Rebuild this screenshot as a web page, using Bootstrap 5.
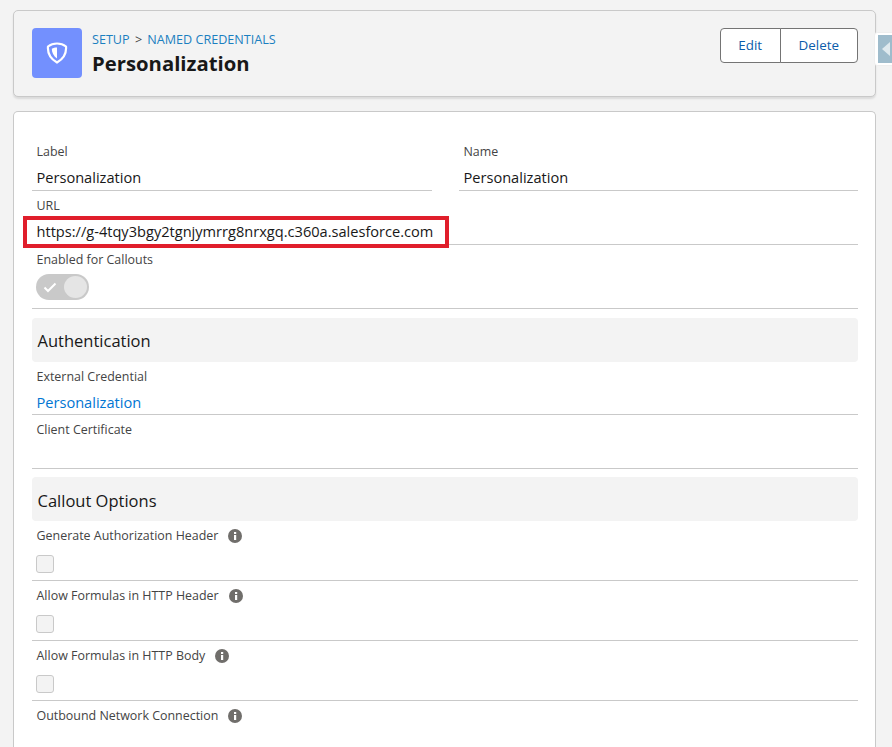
<!DOCTYPE html>
<html>
<head>
    <meta charset="UTF-8">
    <title>Personalization</title>
    <link href="https://cdn.jsdelivr.net/npm/bootstrap@5.3.0/dist/css/bootstrap.min.css" rel="stylesheet">
    <style>
        html, body { height: 747px; overflow: hidden; }
        body { background-color: #f3f3f3; color: #181818; font-family: "Open Sans", "Noto Sans", sans-serif; font-size: 14px; position: relative; }
        .page-wrap { padding: 10px 16px 0 13px; display: flex; flex-direction: column; gap: 14px; height: 747px; }
        .head-card { height: 87px; background: #f3f3f3; border: 1px solid #c9c9c9; border-radius: 5px; box-shadow: 0 2px 2px rgba(0,0,0,.1); padding: 17px 17px 0 18px; flex-shrink: 0; }
        .obj-icon { width: 50px; height: 50px; background: #7390fe; border-radius: 4px; }
        .head-text { margin-left: 2px; }
        .crumbs { font-size: 12.6px; line-height: 16px; color: #1b7fc0; margin-top: 4px; }
        .crumbs span { color: #444; margin: 0 2px; }
        .rec-title { font-size: 20.3px; line-height: 30px; font-weight: 700; margin: 0; color: #181818; }
        .act-group .btn { font-size: 13.4px; color: #0b5cab; background: #fff; border-color: #747474; height: 35px; padding: 0 18px; border-radius: 4px; }
        .act-group .btn:first-child { padding: 0 17.500px; }
        .body-card { flex: 1; background: #fff; border: 1px solid #c9c9c9; border-bottom: 0; border-radius: 5px 5px 0 0; padding: 25px 17px 0 18px; }
        .field-box { border-bottom: 1px solid #c9c9c9; padding: 7px 4px 0 4.5px; height: 54px; }
        .field-box.tall { height: 64px; }
        .field-box.opt { height: 60px; }
        .field-box.last { border-bottom: 0; }
        .field-lbl { font-size: 12.45px; line-height: 16px; color: #444; display: flex; align-items: center; gap: 10px; }
        .field-val { font-size: 14.6px; line-height: 20px; margin-top: 6.5px; color: #181818; }
        .field-val a { color: #0176d3; text-decoration: none; }
        .sect-head { height: 44px; background: #f3f3f3; border-radius: 4px; font-size: 16.5px; line-height: 45px; padding-left: 5.5px; margin: 9px 0 0 0; color: #181818; }
        .sect-head.second { margin-top: 8px; line-height: 47px; }
        .sect-head + .field-box { height: 53px; }
        .sect-head + .field-box.opt { height: 60px; }
        .toggle-off { width: 53px; height: 26px; background: #c9c9c9; border-radius: 13px; margin-top: 5.5px; margin-left: -0.5px; padding: 2px; display: flex; align-items: center; justify-content: space-between; }
        .toggle-off i { width: 23px; height: 22px; background: #e5e5e5; border-radius: 50%; display: block; }
        .fake-check { width: 18px; height: 18px; background: #f3f3f3; border: 1px solid #c9c9c9; border-radius: 3px; margin-top: 11px; margin-left: -0.5px; }
        .red-box { position: absolute; left: 23px; top: 216px; width: 426px; height: 32px; border: 4px solid #e01e2b; }
        .side-tab { position: absolute; left: 874px; top: 32px; width: 18px; height: 34px; background: #fff; border: 1px solid #eee; border-right: 0; border-radius: 4px 0 0 4px; padding: 2px 0 2px 3px; }
        .side-tab div { height: 28px; background: #9fbccc; display: flex; align-items: center; padding-left: 4px; }
    </style>
</head>
<body>
    <div class="page-wrap">
        <!-- Cabecalho -->
        <div class="head-card d-flex justify-content-between">
            <div class="d-flex gap-2">
                <div class="obj-icon d-flex align-items-center justify-content-center">
                    <svg width="22" height="24" viewBox="0 0 22 24">
                        <path d="M11 2.500 C14 2.500 17.500 3.500 20 5.500 C20.500 11 18 17.500 11 21.500 C4 17.500 1.500 11 2 5.500 C4.500 3.500 8 2.500 11 2.500 Z" fill="none" stroke="#fff" stroke-width="2.200"/>
                        <path d="M11 6.500 C9 6.500 7.200 7 5.800 7.800 C5.800 11.500 7.500 15 11 17.500 Z" fill="#fff"/>
                    </svg>
                </div>
                <div class="head-text">
                    <div class="crumbs">SETUP <span>&gt;</span> NAMED CREDENTIALS</div>
                    <h1 class="rec-title">Personalization</h1>
                </div>
            </div>
            <div class="btn-group act-group align-self-start">
                <button type="button" class="btn">Edit</button>
                <button type="button" class="btn">Delete</button>
            </div>
        </div>

        <!-- Detalhes -->
        <div class="body-card">
            <div class="row g-0 justify-content-between">
                <div class="col-auto field-box" style="width: 400px">
                    <div class="field-lbl">Label</div>
                    <div class="field-val">Personalization</div>
                </div>
                <div class="col-auto field-box" style="width: 399px">
                    <div class="field-lbl">Name</div>
                    <div class="field-val">Personalization</div>
                </div>
            </div>
            <div class="field-box">
                <div class="field-lbl">URL</div>
                <div class="field-val">https://g-4tqy3bgy2tgnjymrrg8nrxgq.c360a.salesforce.com</div>
            </div>
            <div class="field-box tall">
                <div class="field-lbl">Enabled for Callouts</div>
                <div class="toggle-off">
                    <svg class="ms-1" width="16" height="14" viewBox="0 0 16 14"><path d="M2.500 7.500 6 11 13.500 3.500" fill="none" stroke="#fff" stroke-width="2"/></svg>
                    <i></i>
                </div>
            </div>

            <div class="sect-head">Authentication</div>
            <div class="field-box">
                <div class="field-lbl">External Credential</div>
                <div class="field-val"><a href="#">Personalization</a></div>
            </div>
            <div class="field-box">
                <div class="field-lbl">Client Certificate</div>
            </div>

            <div class="sect-head second">Callout Options</div>
            <div class="field-box opt">
                <div class="field-lbl">Generate Authorization Header <svg width="14" height="14" viewBox="0 0 14 14"><circle cx="7" cy="7" r="7" fill="#706e6b"/><rect x="6" y="6" width="2.200" height="5" fill="#fff"/><rect x="6" y="3" width="2.200" height="2" fill="#fff"/></svg></div>
                <div class="fake-check"></div>
            </div>
            <div class="field-box opt">
                <div class="field-lbl">Allow Formulas in HTTP Header <svg width="14" height="14" viewBox="0 0 14 14"><circle cx="7" cy="7" r="7" fill="#706e6b"/><rect x="6" y="6" width="2.200" height="5" fill="#fff"/><rect x="6" y="3" width="2.200" height="2" fill="#fff"/></svg></div>
                <div class="fake-check"></div>
            </div>
            <div class="field-box opt">
                <div class="field-lbl">Allow Formulas in HTTP Body <svg width="14" height="14" viewBox="0 0 14 14"><circle cx="7" cy="7" r="7" fill="#706e6b"/><rect x="6" y="6" width="2.200" height="5" fill="#fff"/><rect x="6" y="3" width="2.200" height="2" fill="#fff"/></svg></div>
                <div class="fake-check"></div>
            </div>
            <div class="field-box opt last">
                <div class="field-lbl">Outbound Network Connection <svg width="14" height="14" viewBox="0 0 14 14"><circle cx="7" cy="7" r="7" fill="#706e6b"/><rect x="6" y="6" width="2.200" height="5" fill="#fff"/><rect x="6" y="3" width="2.200" height="2" fill="#fff"/></svg></div>
            </div>
        </div>
    </div>

    <div class="red-box"></div>
    <div class="side-tab"><div><svg width="8" height="14" viewBox="0 0 8 14"><path d="M8 0V14L0 7Z" fill="#dfe9ee"/></svg></div></div>

    <script src="https://cdn.jsdelivr.net/npm/bootstrap@5.3.0/dist/js/bootstrap.bundle.min.js"></script>
</body>
</html>
